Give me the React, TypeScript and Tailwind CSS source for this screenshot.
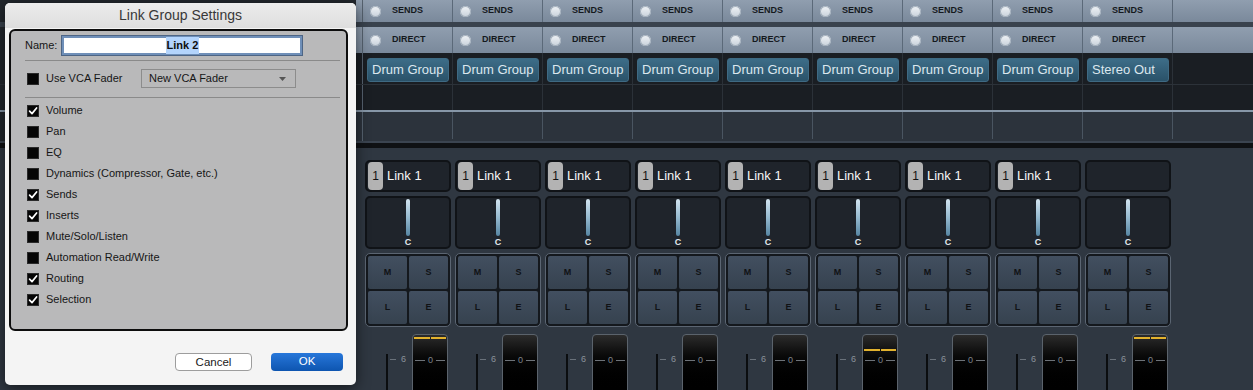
import React from 'react';

const channels = [
  'Drum Group',
  'Drum Group',
  'Drum Group',
  'Drum Group',
  'Drum Group',
  'Drum Group',
  'Drum Group',
  'Drum Group',
  'Stereo Out',
];

// fader caps carrying a yellow marker line (index -> top offset class)
const markers: Record<number, string> = { 0: 'top-[2px]', 5: 'top-[14px]', 8: 'top-[2px]' };

const options = [
  { label: 'Volume', on: true },
  { label: 'Pan', on: false },
  { label: 'EQ', on: false },
  { label: 'Dynamics (Compressor, Gate, etc.)', on: false },
  { label: 'Sends', on: true },
  { label: 'Inserts', on: true },
  { label: 'Mute/Solo/Listen', on: false },
  { label: 'Automation Read/Write', on: false },
  { label: 'Routing', on: true },
  { label: 'Selection', on: true },
];

function Lead() {
  return (
    <div className="flex h-full shrink-0">
      <div className="h-full w-[356px] bg-[#22272d]" />
      <div className="h-full w-[7px] border-r border-[#56626f]" />
    </div>
  );
}

function Band({ label, height }: { label: string; height: string }) {
  return (
    <div className={`flex ${height} bg-linear-to-b from-[#909eaf] to-[#7a899b]`}>
      <Lead />
      {channels.map((_, i) => (
        <div key={i} className="flex w-[90px] shrink-0 items-center border-r border-[#5b6979] pl-[7px]">
          <span className="h-[11px] w-[11px] rounded-full bg-linear-to-b from-[#f1f4f7] to-[#c8d1db] shadow-[inset_0_0_0_1px_#a3afbc]" />
          <span className="ml-[11px] text-[9px] font-bold text-[#15191d]">{label}</span>
        </div>
      ))}
      <div className="flex-1" />
    </div>
  );
}

function CheckBox({ on }: { on: boolean }) {
  return (
    <span className="flex h-[12px] w-[12px] shrink-0 items-center justify-center border border-[#2a2a2a] bg-[#050505]">
      {on && (
        <svg width="10" height="10" viewBox="0 0 10 10">
          <path d="M1.6 5.2 L4 7.6 L8.6 2" fill="none" stroke="#ffffff" strokeWidth="1.7" strokeLinecap="round" strokeLinejoin="round" />
        </svg>
      )}
    </span>
  );
}

function Channel({ name, index }: { name: string; index: number }) {
  const stereo = name === 'Stereo Out';
  return (
    <div className="flex w-[90px] shrink-0 flex-col gap-[4px] px-[2px]">
      <div className="flex h-[32px] items-center rounded-[5px] border-2 border-[#101317] bg-[#1f242b] pl-[1px]">
        {!stereo && (
          <>
            <span className="flex h-[28px] w-[15px] items-center justify-center rounded-[4px] bg-[#b3b3b3] text-[12px] text-[#111]">1</span>
            <span className="ml-[4px] text-[13px] text-[#f5f5f5]">Link 1</span>
          </>
        )}
      </div>
      <div className="flex h-[53px] flex-col items-center rounded-[5px] border-2 border-[#101317] bg-[#1f242b] pt-[1px]">
        <span className="h-[38px] w-[4px] rounded-full bg-linear-to-b from-[#d4e6f1] via-[#96bad0] to-[#5585a2]" />
        <span className="mt-[1px] text-[9px] font-bold leading-[10px] text-[#e2e9ef]">C</span>
      </div>
      <div className="grid h-[74px] grid-cols-2 gap-[2px] rounded-[5px] border border-[#5b6572] bg-[#14181d] p-[2px]">
        {['M', 'S', 'L', 'E'].map((k) => (
          <div key={k} className="flex items-center justify-center rounded-[2px] bg-linear-to-b from-[#424f60] to-[#36424f]">
            <span className="text-[9px] font-bold text-[color:#101215]">{k}</span>
          </div>
        ))}
      </div>
      <div className="flex h-[60px] pt-[3px]">
        <div className="ml-[21px] mt-[20px] h-[40px] w-[2px] bg-[#0b0d0f]" />
        <div className="ml-[2px] mt-[20px] flex h-[10px] items-center gap-[5px]">
          <span className="h-px w-[6px] bg-[#69717a]" />
          <span className="text-[9px] leading-none text-[#8b939b]">6</span>
        </div>
        <div className="relative ml-auto mr-[3px] h-[60px] w-[36px] rounded-t-[4px] border border-[#5b636c] bg-linear-to-b from-[#2c2c2c] via-[#0a0a0a] via-[35%] to-black">
          {markers[index] && (
            <div className={`absolute left-[1px] right-[1px] ${markers[index]} flex gap-[1px]`}>
              <span className="h-[2px] flex-1 bg-[#e2b22e]" />
              <span className="h-[2px] flex-1 bg-[#e2b22e]" />
            </div>
          )}
          <div className="mt-[20px] flex h-[10px] items-center justify-center gap-[3px]">
            <span className="h-px w-[10px] bg-[#6d7278]" />
            <span className="text-[9px] leading-none text-[#7e848b]">0</span>
            <span className="h-px w-[9px] bg-[#6d7278]" />
          </div>
        </div>
      </div>
    </div>
  );
}

function Mixer() {
  return (
    <div className="flex flex-col">
      <Band label="SENDS" height="h-[22px]" />
      <div className="h-[5px] bg-[#39424d]" />
      <Band label="DIRECT" height="h-[26px]" />
      <div className="flex h-[31px] bg-[#1a1e23]">
        <Lead />
        {channels.map((name, i) => (
          <div key={i} className="w-[90px] shrink-0 border-r border-[#2b3138] pl-[4px] pr-[3px] pt-[5px]">
            <div className="flex h-[24px] items-center rounded-[3px] border border-[#3f6a83] bg-linear-to-b from-[#3d6d88] to-[#2a5269] pl-[4px] text-[13px] text-[#dce7ee]">
              {name}
            </div>
          </div>
        ))}
        <div className="flex-1" />
      </div>
      <div className="flex h-[26px] border-t border-[#2c3239] bg-[#1a1e23]">
        <Lead />
        {channels.map((_, i) => (
          <div key={i} className="w-[90px] shrink-0 border-r border-[#2b3138]" />
        ))}
        <div className="flex-1" />
      </div>
      <div className="h-[2px] bg-[#8797a8]" />
      <div className="flex h-[29px] bg-[#2c333c]">
        <Lead />
        {channels.map((_, i) => (
          <div key={i} className="mb-[2px] w-[90px] shrink-0 border-r border-[#4a5561]" />
        ))}
        <div className="flex-1" />
      </div>
      <div className="h-[2px] bg-[#3b4450]" />
      <div className="h-[5px] bg-[#0f1114]" />
      <div className="flex pt-[12px]">
        <div className="w-[363px] shrink-0" />
        {channels.map((name, i) => (
          <Channel key={i} name={name} index={i} />
        ))}
      </div>
    </div>
  );
}

function Dialog() {
  return (
    <div className="absolute left-[5px] top-[3px] flex h-[382px] w-[351px] flex-col rounded-[5px] bg-[#f4f4f4] shadow-[0_3px_14px_rgba(0,0,0,0.55)]">
      <div className="flex h-[25px] items-center justify-center rounded-t-[5px] bg-linear-to-b from-[#ececec] to-[#dedede] text-[14px] text-[#383838]">
        Link Group Settings
      </div>
      <div className="ml-[4px] mt-[1px] h-[302px] w-[339px] rounded-[6px] border-2 border-[#0d0d0d] bg-[#b9b9ba] text-[11px] text-[#161616]">
        <div className="mt-[5px] flex h-[19px] items-center pl-[14px]">
          <span>Name:</span>
          <div className="ml-[5px] flex h-[19px] w-[240px] items-center justify-center border-2 border-[#6f8fb8] bg-white shadow-[0_0_0_1px_#4d6585]">
            <span className="bg-[#b3d4fc] px-[1px] font-bold text-[#0e0e0e]">Link 2</span>
          </div>
        </div>
        <div className="ml-[14px] mr-[6px] mt-[5px] h-px bg-[#8a8a8a]" />
        <div className="mt-[8px] flex h-[19px] items-center pl-[16px]">
          <CheckBox on={false} />
          <span className="ml-[7px] w-[95px]">Use VCA Fader</span>
          <div className="flex h-[19px] w-[155px] items-center border border-[#8c8c8c] pl-[7px] pr-[9px]">
            <span>New VCA Fader</span>
            <svg className="ml-auto" width="7" height="4" viewBox="0 0 7 4">
              <path d="M0 0 H7 L3.5 4 Z" fill="#555" />
            </svg>
          </div>
        </div>
        <div className="ml-[14px] mr-[6px] mt-[9px] h-px bg-[#8a8a8a]" />
        <div className="mt-[2px] flex flex-col">
          {options.map((o) => (
            <div key={o.label} className="flex h-[21px] items-center gap-[7px] pl-[16px]">
              <CheckBox on={o.on} />
              <span>{o.label}</span>
            </div>
          ))}
        </div>
      </div>
      <div className="mt-[22px] flex justify-end gap-[19px] pr-[13px] text-[11.5px]">
        <button className="h-[18px] w-[77px] rounded-[4px] border border-[#9d9d9d] bg-white text-[#1a1a1a]">Cancel</button>
        <button className="h-[18px] w-[72px] rounded-[4px] bg-linear-to-b from-[#2777da] to-[#0d55b0] text-white">OK</button>
      </div>
    </div>
  );
}

export default function App() {
  return (
    <div className="relative h-[390px] w-[1253px] overflow-hidden bg-[#2f3741] font-['Liberation_Sans',Arial,sans-serif]">
      <Mixer />
      <Dialog />
    </div>
  );
}
